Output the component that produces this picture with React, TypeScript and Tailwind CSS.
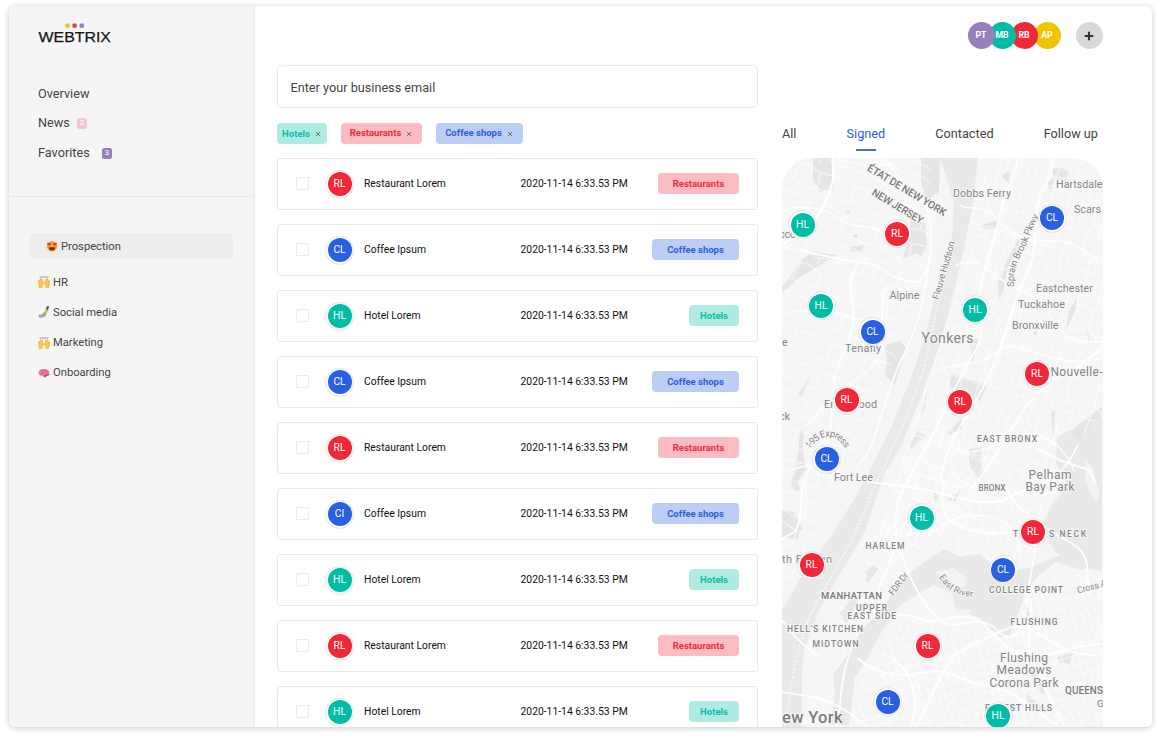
import React from "react";
import { X, Plus } from "lucide-react";

type Kind = "rl" | "cl" | "hl";

const tone: Record<Kind, { dot: string; pill: string; label: string }> = {
  rl: { dot: "bg-[#f22738]", pill: "bg-[#fbbdc2] text-[#f02a3c]", label: "Restaurants" },
  cl: { dot: "bg-[#2860e1]", pill: "bg-[#bccef5] text-[#2c60df]", label: "Coffee shops" },
  hl: { dot: "bg-[#00bda5]", pill: "bg-[#b0ebe3] text-[#0cbda6]", label: "Hotels" },
};

const rows: { kind: Kind; initials: string; name: string }[] = [
  { kind: "rl", initials: "RL", name: "Restaurant Lorem" },
  { kind: "cl", initials: "CL", name: "Coffee Ipsum" },
  { kind: "hl", initials: "HL", name: "Hotel Lorem" },
  { kind: "cl", initials: "CL", name: "Coffee Ipsum" },
  { kind: "rl", initials: "RL", name: "Restaurant Lorem" },
  { kind: "cl", initials: "CI", name: "Coffee Ipsum" },
  { kind: "hl", initials: "HL", name: "Hotel Lorem" },
  { kind: "rl", initials: "RL", name: "Restaurant Lorem" },
  { kind: "hl", initials: "HL", name: "Hotel Lorem" },
];

const pins: [Kind, number, number][] = [
  ["hl", 802.5, 224.5], ["rl", 897, 233.5], ["cl", 1052, 218], ["hl", 821, 305.5],
  ["cl", 872.5, 331.5], ["hl", 975, 309.5], ["rl", 1037, 374], ["rl", 846.5, 400],
  ["rl", 960, 402], ["cl", 826.5, 459], ["hl", 921.5, 517.5], ["rl", 1033, 532],
  ["rl", 811.5, 565], ["cl", 1003, 569.5], ["rl", 927.5, 646], ["cl", 887.5, 701.5],
  ["hl", 998, 716],
];

function Badge({ kind, text }: { kind: Kind; text: string }) {
  return (
    <div className="flex size-[29px] shrink-0 items-center justify-center rounded-full border border-[#e4e4e8] bg-white">
      <div className={`flex size-6 items-center justify-center rounded-full pt-px text-[10.300px] leading-none text-white ${tone[kind].dot}`}>
        {text}
      </div>
    </div>
  );
}

function Logo() {
  return (
    <svg className="block" width="74" height="22" viewBox="38 23 74 22">
      <circle cx="67.5" cy="25.7" r="2.4" fill="#e8c41c" />
      <circle cx="74.6" cy="25.7" r="2.4" fill="#dc4350" />
      <circle cx="81.8" cy="25.7" r="2.4" fill="#9a80bd" />
      <text x="38.5" y="42.2" fontFamily="Liberation Sans, sans-serif" fontSize="15.2" textLength="72.5" lengthAdjust="spacingAndGlyphs" fill="#161616" stroke="#161616" strokeWidth=".25">WEBTRIX</text>
    </svg>
  );
}

function HeartEyes() {
  return (
    <svg width="12" height="12" viewBox="0 0 24 24">
      <circle cx="12" cy="12.5" r="10.5" fill="#f9ae28" />
      <path d="M5.500 14.500h13c0 4-2.800 6.500-6.500 6.500s-6.500-2.500-6.500-6.500z" fill="#6b2f17" />
      <path d="M6.500 12 2.500 8.500C1.500 5.500 4.500 4.500 6 6.500c1.500-2 5-1 4 2zM17.500 12l-4-3.500c-1-3 2.500-4 4-2 1.500-2 5-1 4 2z" fill="#e8303c" />
    </svg>
  );
}

function Hands() {
  return (
    <svg width="12" height="12" viewBox="0 0 24 24">
      <g stroke="#555b66" strokeWidth="1.300" strokeLinecap="round">
        <path d="M5 3 4 1M8.500 2.500V.8M12 3.500v-2M15.500 2.500V.8M19 3l1-2" />
      </g>
      <path d="M2 23v-5C0 15 .5 10 1.500 8.500l1.500 4L4 6l1.500.5L6 5l1.500.5L8 7l1.500.5L9 12l2.500 1c-.5 4-2.500 5-3 6v4zM22 23v-5c2-3 1.500-8 .5-9.500l-1.500 4L20 6l-1.500.5L18 5l-1.500.5L16 7l-1.500.5.5 4.500-2.500 1c.5 4 2.500 5 3 6v4z" fill="#fbc84b" stroke="#e9a52d" strokeWidth=".9" />
    </svg>
  );
}

function Selfie() {
  return (
    <svg width="12" height="12" viewBox="0 0 24 24">
      <path d="M1 17c5 1 9-1 11-4l4-6 3 2-3 9c-2 5-9 6-14 5z" fill="#a4a6aa" />
      <path d="m14 8 3-4 4 3-2 5-4 1z" fill="#e3b45a" />
      <path d="m17 1 5-1-2 8-3-2z" fill="#3f4653" />
    </svg>
  );
}

function Brain() {
  return (
    <svg width="12" height="12" viewBox="0 0 24 24">
      <path d="M1 12C1 6 6 3.500 12 4c7 0 11 4 11 9 0 3-3 4-6 4l-2 3c-2 1-4-1-5-3-5 1-9-1-9-5z" fill="#ea7ba3" />
      <path d="M10 17c4 0 5-1 7-2l6-1c0 2-3 4-6 4l-2 2.500c-2 .5-4-1-5-3.500z" fill="#b73f72" />
      <path d="M5 8c3-2 5 1 3 3m3-6c3 0 2 4 5 3m-12 6c3 1 5-1 8-1m3-1c2 1 4-1 3-3" fill="none" stroke="#bd4c7d" strokeWidth="1.100" />
    </svg>
  );
}

type Label = { t: string; x: number; y: number; w: number; s: number; b?: number; r?: number; c?: string };

const labels: Label[] = [
  { t: "ÉTAT DE NEW YORK", x: 866.500, y: 170, w: 90, s: 10.500, b: 500, r: 31, c: "#777" },
  { t: "NEW JERSEY", x: 871, y: 194.500, w: 58, s: 10.500, b: 500, r: 31, c: "#777" },
  { t: "Dobbs Ferry", x: 953, y: 196.500, w: 58, s: 10.800 },
  { t: "Hartsdale", x: 1056, y: 188, w: 46.500, s: 10.800 },
  { t: "Scars", x: 1074, y: 213, w: 27, s: 10.800 },
  { t: "Fleuve Hudson", x: 938.500, y: 300, w: 60, s: 9.500, r: -74 },
  { t: "Alpine", x: 889.500, y: 298.500, w: 30, s: 10.800 },
  { t: "Eastchester", x: 1036, y: 292, w: 57, s: 10.800 },
  { t: "Tuckahoe", x: 1018, y: 308, w: 47, s: 10.800 },
  { t: "Bronxville", x: 1012, y: 329, w: 46.500, s: 10.800 },
  { t: "Yonkers", x: 921.500, y: 342.500, w: 52, s: 14 },
  { t: "Tenafly", x: 845, y: 351.500, w: 36, s: 10.800 },
  { t: "e", x: 782, y: 346, w: 6, s: 10.800 },
  { t: "ooo", x: 779, y: 237.500, w: 17, s: 10.800 },
  { t: "Nouvelle-", x: 1050.500, y: 376, w: 52, s: 12 },
  { t: "Englewood", x: 824, y: 408, w: 53, s: 10.800 },
  { t: "ck", x: 779, y: 420, w: 11, s: 10.800 },
  { t: "Fort Lee", x: 834, y: 480.500, w: 39, s: 10.800 },
  { t: "EAST BRONX", x: 977, y: 441.500, w: 60, s: 8.500, b: 500 },
  { t: "Pelham", x: 1028.500, y: 478.500, w: 43, s: 12 },
  { t: "Bay Park", x: 1025.500, y: 491, w: 49, s: 12 },
  { t: "BRONX", x: 978.500, y: 491, w: 27, s: 8.300, b: 500 },
  { t: "THROGS NECK", x: 1013, y: 537, w: 73, s: 8.500, b: 500 },
  { t: "HARLEM", x: 865.500, y: 549, w: 39, s: 8.500, b: 500 },
  { t: "th Bergen", x: 782, y: 562.500, w: 50, s: 10.800 },
  { t: "MANHATTAN", x: 821, y: 598.500, w: 61, s: 9.500, b: 500, c: "#777" },
  { t: "UPPER", x: 856, y: 610.500, w: 31, s: 8.500, b: 500 },
  { t: "EAST SIDE", x: 847.500, y: 619, w: 48.500, s: 8.500, b: 500 },
  { t: "HELL'S KITCHEN", x: 787, y: 632, w: 76, s: 8.500, b: 500 },
  { t: "MIDTOWN", x: 812.500, y: 647, w: 46, s: 8.500, b: 500 },
  { t: "FDR Dr", x: 893, y: 596, w: 26, s: 9, r: -53 },
  { t: "COLLEGE POINT", x: 989, y: 592.500, w: 74, s: 8.500, b: 500 },
  { t: "Cross A", x: 1078, y: 593.500, w: 30, s: 9, r: -15 },
  { t: "FLUSHING", x: 1010.500, y: 625, w: 47, s: 8.500, b: 500 },
  { t: "Flushing", x: 1000, y: 661.500, w: 48, s: 12 },
  { t: "Meadows", x: 996.500, y: 674, w: 55, s: 12 },
  { t: "Corona Park", x: 989.500, y: 686.500, w: 69, s: 12 },
  { t: "QUEENS", x: 1065, y: 693.500, w: 38, s: 10, b: 500, c: "#777" },
  { t: "G", x: 1097, y: 707, w: 7, s: 9.500 },
  { t: "FOREST HILLS", x: 985, y: 710.500, w: 67, s: 8.500, b: 500 },
  { t: "ew York", x: 782, y: 723, w: 60.500, s: 16.500, b: 500, c: "#7c7c7c" },
];

const parks = [
  "M813 158h18l2 30-13 4-7-12z",
  "M921 158h19l-1 34-12 8-6-18z",
  "M782 288l20-28 10-8 25 3-20 12-17 10-18 16z",
  "M845 213l6-4-2 5zM852 236l6-3-1 6zM849 247l15-2-2 6-11 1z",
  "M911 219l14 4 2 25-6 10-4-5-15 6 5-14z",
  "M1002 176l8-6-1 14zM980 226l8-3 10-3-2 8-11 1zM1050 169l12-1 7 4-4 10-10-4zM1045 183l10-6-4 13z",
  "M998 280l12-25 8-16 2 4-12 23-5 26-4 7z",
  "M1069 311l8-14-1 13-10 21zM1033 333l4-4-1 8zM1086 333l3-4v12z",
  "M884 345l16-4 6 7-11 37-10-10 2-16z",
  "M920 415l9-30-5 25z",
  "M950 373l37 12-7 16-16-5-14-8z",
  "M970 340l9-1-7 24zM798 395l13-20-10 23z",
  "M800 430l4 1-1 20 3 18-8 12 2 8-5 2-4-8 6-22z",
  "M910 443l8-12 8 5-15 13zM946 436l15-18 1 11z",
  "M969 449l12-2 1 32-7-4-6-12z",
  "M1051 413l4-3-2 27zM1060 448l12-18 18-14 12-9v65l-24-9z",
  "M933 492l6 4-3 7zM947 500l13-10-4 12z",
  "M865 572l8-7 6 4-12 15zM840 614l14-20 6 4-14 26z",
  "M1023 609l3-6 4 12-3 1zM1058 656l15-3-3 11-12-2zM1035 668l10 26-4 1-12-25zM1026 694l16 13-3 8-12-13z",
  "M782 510l12 2 8 16-5 11-15-2z",
];

const majorRoads = [
  "M782 247c20 3 50 12 77 15s24 15 53 20c10 2 14-9 17-21",
  "M833 158c4 34-14 56-22 66s-29 20-29 20",
  "M882 158c12 12 20 22 27 35 12 8 18 7 21 28s-1 53-9 86-14 40-22 58-19 54-26 76c-6 22-17 18-20 40",
  "M859 262c-21 27 6 46-13 85s-12 60-16 85-28 30-29 70-12 28-19 38",
  "M1018 158c-7 29-17 44-20 64s-13 40-17 65 4 45-4 60-23 41-35 68-20 37-31 60-16 28-15 52-9 42-19 65-27 52-33 82-2 34-8 53",
  "M1052 158c4 18-12 32-15 50s2 45-12 70-18 62-39 104-35 48-46 97",
  "M782 472c24-5 35-14 57 0s63 10 100 21 57 13 75 2 42-4 64-50",
  "M970 490c24-25 46-75 66-95s36-20 66-47",
  "M1006 488c9 20 26 30 45 43s32 14 36 33l2 30",
  "M900 550c10 30 20 50 37 68s40-8 60 12 27-6 30-30 8-43 9-62",
  "M897 615c12-2 23 6 37 6s34-12 50 4 24 26 42 31 49-12 76-12",
  "M857 658c25 20 48 18 70 14s36 10 61 14 44 22 71 41",
  "M916 727c20-35 26-70 55-82s40-24 60-15 40 30 71 24",
  "M892 657c20 15 30 44 18 70M940 474c9 20-8 37 17 51s70 8 85-4",
  "M1031 600c2 24-8 35 3 63s16 35 31 64",
  "M782 692c15 3 31 3 48 10s30 20 39 25M782 620c10 16 22 26 36 36",
];

const clusters: { d: string; p: string }[] = [
  { p: "url(#gridA)", d: "M782 160h150l-5 90-25 90-45 120-50 110-25 25z" },
  { p: "url(#gridB)", d: "M975 158h127v280l-40 30-40 110-90-30-60 10 40-130 40-120z" },
  { p: "url(#gridC)", d: "M861 540l55-45 0 60-46 75-28 97h-43l7-70z" },
  { p: "url(#gridD)", d: "M848 727l12-50 45-65 35 12 60 15 35-65h67v153z" },
  { p: "url(#gridC)", d: "M887 480l50-65 45 40-15 75-60 10z" },
];

function CityMap() {
  return (
    <svg className="block h-full w-full" viewBox="782 158 321 569" preserveAspectRatio="none">
      <defs>
        <pattern id="gridA" width="37" height="31" patternUnits="userSpaceOnUse" patternTransform="rotate(22)">
          <path d="M0 5l12 3 25-4M12 8l2 15-14 4M14 23l23 2M27 4l-2 19M6 27v4" fill="none" stroke="#fff" strokeWidth="1" />
        </pattern>
        <pattern id="gridB" width="29" height="35" patternUnits="userSpaceOnUse" patternTransform="rotate(18)">
          <path d="M5 0l2 15-2 20M17 0l-2 17 3 18M7 15l8 2 14-3M0 28l29-2M23 15v12" fill="none" stroke="#fff" strokeWidth="1" />
        </pattern>
        <pattern id="gridC" width="9" height="13" patternUnits="userSpaceOnUse" patternTransform="rotate(29)">
          <path d="M0 0v13M0 0h9M0 6h9" fill="none" stroke="#fff" strokeWidth=".9" />
        </pattern>
        <pattern id="gridD" width="23" height="19" patternUnits="userSpaceOnUse" patternTransform="rotate(-17)">
          <path d="M0 0l10 1 13-1M10 1l1 18M0 10l23 1M18 0v19M4 10v9" fill="none" stroke="#fff" strokeWidth="1" />
        </pattern>
      </defs>
      <rect x="782" y="158" width="321" height="569" fill="#f6f6f6" />
      {parks.map((d) => <path key={d} d={d} fill="#e5e5e5" />)}
      {clusters.map((c) => <path key={c.d} d={c.d} fill={c.p} opacity=".75" />)}
      <g fill="#e9e9e9">
        <path d="M940 158h38l-5 45-9 46-12 50-12 45-18 50-20 50-18 30-20 60-28 46-17 30-15 40-2 27 0 50h-20V610l18-31 30-41 25-40 16-30 20-40 20-50 15-45 11-45 14-45 3-40z" />
        <path d="M1057 437l13-7 10 13 13-20 9-7v155l-30-5-17-15-14-23 12-25 14-18-11-22z" />
        <path d="M1102 556l-20 14-26-8-16 12-15 18-3 12-12 31-10 2-20-19-24-8-4-17-19-8-16 10-18 11-17 25-15 28-12 18-3 25-3 23h-19l5-30-2-20 13-18 16-28 20-19 17-28 14-12 31-21 16 8 20-3 20 17 28-3 40-16 34-7z" />
      </g>
      <g fill="#f4f4f4">
        <path d="M936 572l17-4 14 10-5 14-14-6zM955 608l18 2-6 6z" />
        <path d="M1085 460l8 8 7 28-5 5-9-18z" />
      </g>
      <path d="M1035 448l24 12 30 10 6 12" fill="none" stroke="#fff" strokeWidth="2" />
      <path d="M894 164c-20 3-31 3-56-5M782 210c22-5 44-2 60 10s38 0 55 25M870 325c-22-9-45-22-88-10M886 286c-12 38 11 60-19 85s-44 34-62 56M960 205c9 8 20-5 38 14s29 23 55 22 31 16 49 19M955 266c20-12 33 4 48 15s31 8 47 35 30 26 52 26M938 370c18-8 44-3 60-19s58 21 104 7M960 452c37 2 44-18 68-18s42 22 46 38M926 538c25-24 47-26 68-20s25 20 27 43" fill="none" stroke="#fff" strokeWidth="1.300" />
      {majorRoads.map((d) => <path key={d} d={d} fill="none" stroke="#fff" strokeWidth="1.700" />)}
      <path d="M846 165l38 19 46 30 9 12 14-4-4 35-14 60-12 55-18 48-27 60-26 60-42 75-15 45-10 67" fill="none" stroke="#fbfbfb" strokeWidth="1.300" strokeDasharray="2 2" />
      <defs>
        <path id="parkway" d="M1014 287c-1-16 3-25 9-36s8-22 17-37" />
        <path id="express" d="M810 448c10-12 25-20 37 4" />
        <path id="eastRiver" d="M939 577c8 12 16 19 36 20" />
      </defs>
      <g fontFamily="Roboto, sans-serif" fill="#858585" stroke="#f7f7f7" strokeWidth="2" strokeLinejoin="round" paintOrder="stroke">
        {labels.map((l) => (
          <text key={l.t} x={l.x} y={l.y} fontSize={l.s} fontWeight={l.b ?? 400} textLength={l.w} fill={l.c ?? "#858585"} transform={l.r ? `rotate(${l.r} ${l.x} ${l.y})` : undefined}>
            {l.t}
          </text>
        ))}
        <text fontSize="9.500"><textPath href="#parkway" textLength="76">Sprain Brook Pkwy</textPath></text>
        <text fontSize="9.500"><textPath href="#express" textLength="44">I-95 Express</textPath></text>
        <text fontSize="9"><textPath href="#eastRiver" textLength="41">East River</textPath></text>
      </g>
    </svg>
  );
}

const members = [
  { t: "PT", c: "z-40 bg-[#967fba]" },
  { t: "MB", c: "z-30 -ml-[6px] bg-[#00bda5]" },
  { t: "RB", c: "z-20 -ml-[5px] bg-[#f22738]" },
  { t: "AP", c: "z-10 -ml-1 bg-[#edc500]" },
];

const folders = [
  { icon: <Hands />, t: "HR" },
  { icon: <Selfie />, t: "Social media" },
  { icon: <Hands />, t: "Marketing" },
  { icon: <Brain />, t: "Onboarding" },
];

export default function App() {
  return (
    <div className="h-[739px] w-[1163px] overflow-hidden bg-white pt-1.5 pl-[9px] font-[Roboto,sans-serif] text-[#444]">
      <div className="flex h-[721px] w-[1143px] overflow-hidden rounded-md bg-white shadow-[0_1px_6px_rgba(0,0,0,0.22)]">
        <aside className="flex w-[246px] shrink-0 flex-col border-r-2 border-[#ededed] bg-[#f5f5f5]">
          <div className="h-[190px] shrink-0 pt-[17px] pl-[29px]">
            <Logo />
            <nav className="mt-[34px] flex flex-col text-[12.700px] leading-[29.400px]">
              <div>Overview</div>
              <div className="flex items-center">
                News
                <span className="ml-[7px] flex h-[11px] w-[10px] items-center justify-center rounded-[2.500px] bg-[#edcace] text-[8px] leading-none text-white">2</span>
              </div>
              <div className="flex items-center">
                Favorites
                <span className="mt-px ml-[12px] flex h-[11px] w-[10px] items-center justify-center rounded-[2.500px] bg-[#967fba] text-[8px] leading-none text-white">3</span>
              </div>
            </nav>
          </div>
          <div className="border-t border-[#e9e9e9] pt-9 pl-[21px]">
            <div className="flex h-[26px] w-[203px] items-center gap-[3px] rounded-[5px] bg-[#ededed] pl-4 text-[11.200px]">
              <HeartEyes />
              <span className="pt-[2px]">Prospection</span>
            </div>
            <ul className="mt-[8px] pl-2 text-[11.200px]">
              {folders.map((f) => (
                <li key={f.t} className="flex h-[30.300px] items-center gap-[3px]">
                  {f.icon}
                  <span className="pt-[1.500px]">{f.t}</span>
                </li>
              ))}
            </ul>
          </div>
        </aside>

        <main className="flex min-w-0 flex-1 pl-[22px]">
          <section className="w-[481px] shrink-0 pt-[59px]">
            <div className="flex h-[43px] items-center rounded-[5px] border border-[#e9e9ec] pt-[2px] pl-[12.500px] text-[12.700px]">
              Enter your business email
            </div>
            <div className="-ml-[0.500px] mt-[15px] flex h-[21px] gap-[14px] text-[9.500px] font-bold">
              <div className={`flex w-[50px] items-center justify-center gap-1 rounded-[4px] pt-px pl-px ${tone.hl.pill}`}>Hotels <X size={8} color="#444" /></div>
              <div className={`flex w-[81px] items-center justify-center gap-1 rounded-[4px] pl-px ${tone.rl.pill}`}>Restaurants <X size={8} color="#444" /></div>
              <div className={`flex w-[87px] items-center justify-center gap-1 rounded-[4px] pl-px ${tone.cl.pill}`}>Coffee shops <X size={8} color="#444" /></div>
            </div>
            <div className="mt-[14px] flex flex-col gap-[14px]">
              {rows.map((r, i) => (
                <div key={i} className="flex h-[52px] shrink-0 items-center rounded-[3px] border border-[#e9e9eb] pr-[18px] pl-[18px] text-[10.350px] text-[#111]">
                  <span className="mr-[17px] mb-px size-[13px] rounded-[1px] border border-[#ebebeb]" />
                  <div className="-ml-px">
                    <Badge kind={r.kind} text={r.initials} />
                  </div>
                  <span className="ml-[10px] w-[156.500px]">{r.name}</span>
                  <span>2020-11-14 6:33.53 PM</span>
                  <span className={`mb-px ml-auto flex h-[21px] items-center justify-center rounded-[4px] pt-px text-[9.500px] font-bold ${tone[r.kind].pill} ${r.kind === "hl" ? "w-[50px]" : r.kind === "rl" ? "w-[81px]" : "w-[87px]"}`}>
                    {tone[r.kind].label}
                  </span>
                </div>
              ))}
            </div>
          </section>

          <section className="ml-6 flex w-[321px] shrink-0 flex-col">
            <div className="flex shrink-0 justify-end pt-4 pr-[0.500px] text-[8.700px] font-bold text-white">
              {members.map((m) => (
                <div key={m.t} className={`relative flex size-[27px] items-center justify-center rounded-full pt-px ${m.c}`}>{m.t}</div>
              ))}
              <div className="ml-[15px] flex size-[27px] items-center justify-center rounded-full bg-[#d9d9d9] text-[#333]">
                <Plus size={12} strokeWidth={4.300} />
              </div>
            </div>
            <div className="mt-[75px] flex h-[34px] shrink-0 items-start justify-between pr-[5px] text-[12.700px] leading-5">
              <div>All</div>
              <div className="flex flex-col items-center text-[#2c60df]">
                Signed
                <span className="mt-[5px] h-0.5 w-5 bg-[#506fcb]" />
              </div>
              <div>Contacted</div>
              <div>Follow up</div>
            </div>
            <div className="relative min-h-0 flex-1 overflow-hidden rounded-t-[30px]">
              <CityMap />
              {pins.map(([kind, x, y]) => (
                <div key={`${x}-${y}`} className="absolute" style={{ left: x - 796.5, top: y - 172.5 }}>
                  <Badge kind={kind} text={kind.toUpperCase()} />
                </div>
              ))}
            </div>
          </section>
        </main>
      </div>
    </div>
  );
}
